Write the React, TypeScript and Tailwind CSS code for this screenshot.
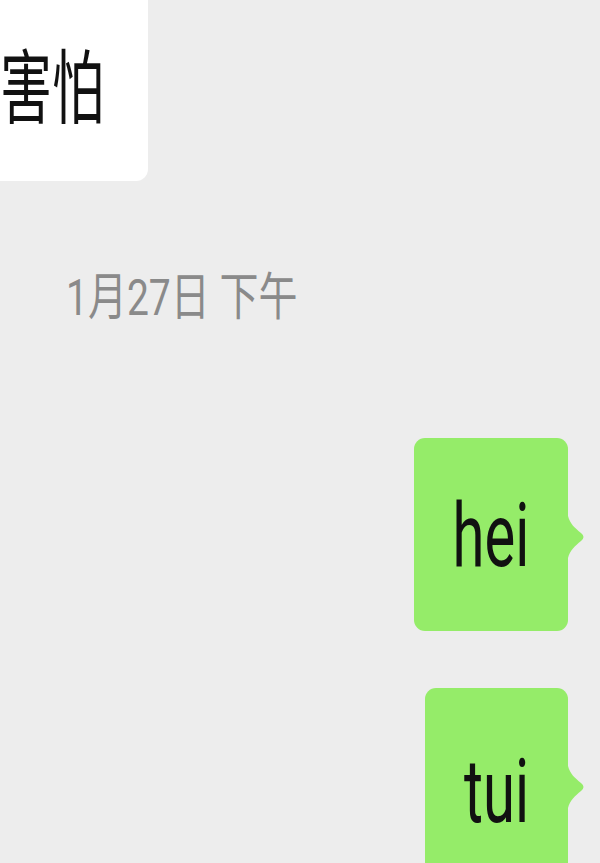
import React from 'react';

const font = { fontFamily: '"Roboto", "Noto Sans CJK SC", sans-serif' };

const Tail = () => (
  <svg
    className="absolute left-full top-[78px]"
    width="18"
    height="42"
    viewBox="0 0 18 42"
    fill="#95ec69"
  >
    <path d="M0 0 C2 8 7 12 13 17 Q18 21 13 25 C7 30 2 34 0 42 Z" />
  </svg>
);

const MyBubble = ({ text, width, height }: { text: string; width: string; height: string }) => (
  <div className="flex justify-end pr-[32px]">
    <div className={`relative flex shrink-0 items-center justify-center rounded-[11px] bg-[#95ec69] ${width} ${height}`}>
      <span className="inline-block scale-y-[1.53] text-[58px] leading-none text-[#111111]">{text}</span>
      <Tail />
    </div>
  </div>
);

export default function App() {
  return (
    <div className="flex h-[863px] w-[600px] flex-col overflow-hidden bg-[#ededed]" style={font}>
      {/* message from the other side, cut off at the top */}
      <div className="flex h-[181px] w-[148px] shrink-0 items-center justify-end rounded-br-[12px] bg-white pr-[44px]">
        <span className="inline-block scale-y-[1.55] text-[52px] leading-none text-[#111111]">害怕</span>
      </div>

      {/* timestamp */}
      <div className="mt-[98px] shrink-0 pl-[66px]">
        <span className="inline-block scale-y-[1.3] text-[39px] leading-none text-[#8a8a8a]">1月27日 下午</span>
      </div>

      <div className="mt-[120px] shrink-0">
        <MyBubble text="hei" width="w-[154px]" height="h-[193px]" />
      </div>
      <div className="mt-[57px] shrink-0">
        <MyBubble text="tui" width="w-[143px]" height="h-[205px]" />
      </div>
    </div>
  );
}
